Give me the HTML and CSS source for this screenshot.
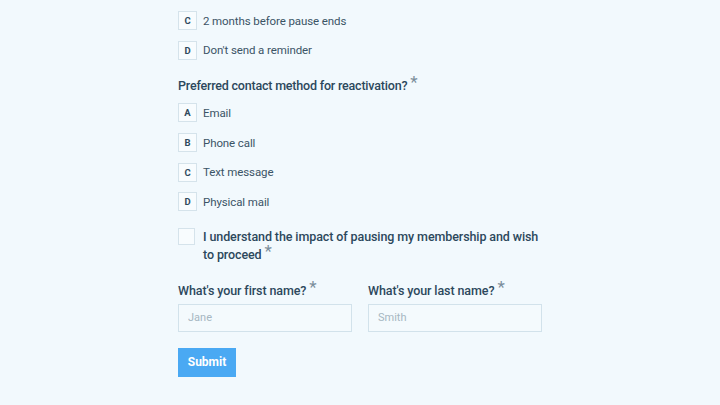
FILE: index.html
```html
<!DOCTYPE html>
<html lang="en">
<head>
    <meta charset="UTF-8">
    <meta name="viewport" content="width=device-width, initial-scale=1.0">
    <title>Pause membership</title>
    <link rel="stylesheet" href="styles.css">
</head>
<body>

    <form class="form">
        <div class="options">
            <label class="option"><span class="key">B</span>1 month before pause ends</label>
            <label class="option"><span class="key">C</span>2 months before pause ends</label>
            <label class="option"><span class="key">D</span>Don't send a reminder</label>
        </div>

        <h2 class="question">Preferred contact method for reactivation? <span class="req">*</span></h2>
        <div class="options">
            <label class="option"><span class="key">A</span>Email</label>
            <label class="option"><span class="key">B</span>Phone call</label>
            <label class="option"><span class="key">C</span>Text message</label>
            <label class="option"><span class="key">D</span>Physical mail</label>
        </div>

        <label class="consent">
            <span class="checkbox"></span>
            <span class="consent-text">I understand the impact of pausing my membership and wish to proceed <span class="req">*</span></span>
        </label>

        <div class="names">
            <div class="field">
                <label class="field-label">What's your first name? <span class="req">*</span></label>
                <input class="text-input" type="text" placeholder="Jane">
            </div>
            <div class="field">
                <label class="field-label">What's your last name? <span class="req">*</span></label>
                <input class="text-input" type="text" placeholder="Smith">
            </div>
        </div>

        <button class="submit" type="button">Submit</button>
    </form>

</body>
</html>
```

FILE: styles.css
```css
body {
    margin: 0;
    background-color: #f2f9fd;
    font-family: Roboto, "Liberation Sans", sans-serif;
    color: #2c485c;
    overflow: hidden;
}

.form {
    margin-top: -24px;
    padding-left: 178px;
}

.options {
    display: flex;
    flex-direction: column;
}

.option {
    display: flex;
    align-items: center;
    gap: 6px;
    height: 29.7px;
    font-size: 11.5px;
    letter-spacing: -0.1px;
    color: #3b5466;
}

.key {
    display: flex;
    align-items: center;
    justify-content: center;
    width: 17px;
    height: 17px;
    border: 1px solid #d5e3eb;
    background-color: #f8fcfe;
    font-size: 9.5px;
    font-weight: 700;
    letter-spacing: 0;
    color: #2f4a5d;
}

.question {
    margin: 11px 0 2px;
    font-size: 12.5px;
    font-weight: 500;
    letter-spacing: -0.2px;
    line-height: 20px;
}

.req {
    color: #7b8e9b;
    font-size: 17px;
    font-weight: 400;
    position: relative;
    top: -2px;
    line-height: 0;
}

.consent {
    display: flex;
    align-items: flex-start;
    gap: 8px;
    margin-top: 11px;
    width: 370px;
}

.checkbox {
    flex: none;
    width: 15px;
    height: 15px;
    border: 1px solid #d5e3eb;
    background-color: #f8fcfe;
}

.consent-text {
    font-size: 12.5px;
    font-weight: 500;
    letter-spacing: -0.1px;
    line-height: 18px;
}

.names {
    display: flex;
    gap: 16px;
    margin-top: 17px;
}

.field {
    display: flex;
    flex-direction: column;
    gap: 3px;
}

.field-label {
    font-size: 12.5px;
    font-weight: 500;
    letter-spacing: -0.1px;
    line-height: 20px;
}

.text-input {
    box-sizing: border-box;
    width: 174px;
    height: 28px;
    padding: 0 9px;
    border: 1px solid #d2e2eb;
    background-color: #f4fafd;
    font-family: inherit;
    font-size: 11px;
    color: #2f4a5d;
    outline: none;
}

.text-input::placeholder {
    color: #a6b7c2;
}

.submit {
    display: block;
    margin-top: 16px;
    width: 58px;
    height: 29px;
    padding: 0;
    border: none;
    background-color: #4aa9f3;
    color: #fff;
    font-family: inherit;
    font-size: 12px;
    font-weight: 700;
    cursor: pointer;
}
```
